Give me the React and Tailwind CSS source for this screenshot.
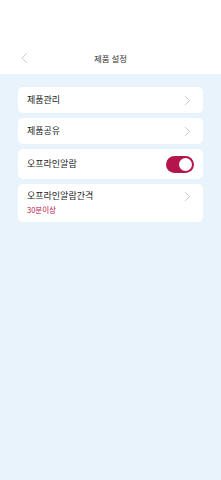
import React from "react";

const Chevron = () => (
  <svg width="7" height="11" viewBox="0 0 7 11" fill="none" className="mr-[3px]">
    <path d="M1 1l4.5 4.5L1 10" stroke="#c4c7cc" strokeWidth="0.9" />
  </svg>
);

export default function App() {
  return (
    <div className="w-[221px] h-[480px] bg-[#e9f3fc] flex flex-col" style={{ fontFamily: '"Noto Sans CJK KR", "Noto Sans", sans-serif' }}>
      <div className="bg-white h-[74px] flex items-end pb-[8px] relative">
        <div className="w-full flex items-center justify-center h-[16px] relative">
          <svg width="7" height="12" viewBox="0 0 7 12" fill="none" className="absolute left-[21px]">
            <path d="M6 1L1 6l5 5" stroke="#c9cbd0" strokeWidth="0.9" />
          </svg>
          <span className="text-[8.5px] text-[#333]">제품 설정</span>
        </div>
      </div>
      <div className="flex flex-col gap-[5px] px-[18px] pt-[13px]">
        <div className="bg-white rounded-[5px] h-[26px] flex items-center justify-between pl-[9px] pr-[9px]">
          <span className="text-[9px] text-[#222]">제품관리</span>
          <Chevron />
        </div>
        <div className="bg-white rounded-[5px] h-[26px] flex items-center justify-between pl-[9px] pr-[9px]">
          <span className="text-[9px] text-[#222]">제품공유</span>
          <Chevron />
        </div>
        <div className="bg-white rounded-[5px] h-[30px] flex items-center justify-between pl-[9px] pr-[9px]">
          <span className="text-[9px] text-[#222]">오프라인알람</span>
          <div className="w-[28px] h-[17px] rounded-full bg-[#b4164b] flex items-center justify-end pr-[2px]">
            <div className="w-[13px] h-[13px] rounded-full bg-white" />
          </div>
        </div>
        <div className="bg-white rounded-[5px] h-[38px] flex justify-between pl-[9px] pr-[9px] pt-[6px]">
          <div className="flex flex-col gap-[3px]">
            <span className="text-[9px] leading-[12px] text-[#222]">오프라인알람간격</span>
            <span className="text-[7.5px] leading-[10px] text-[#b4164b]">30분이상</span>
          </div>
          <div className="pt-[1px]"><Chevron /></div>
        </div>
      </div>
    </div>
  );
}
